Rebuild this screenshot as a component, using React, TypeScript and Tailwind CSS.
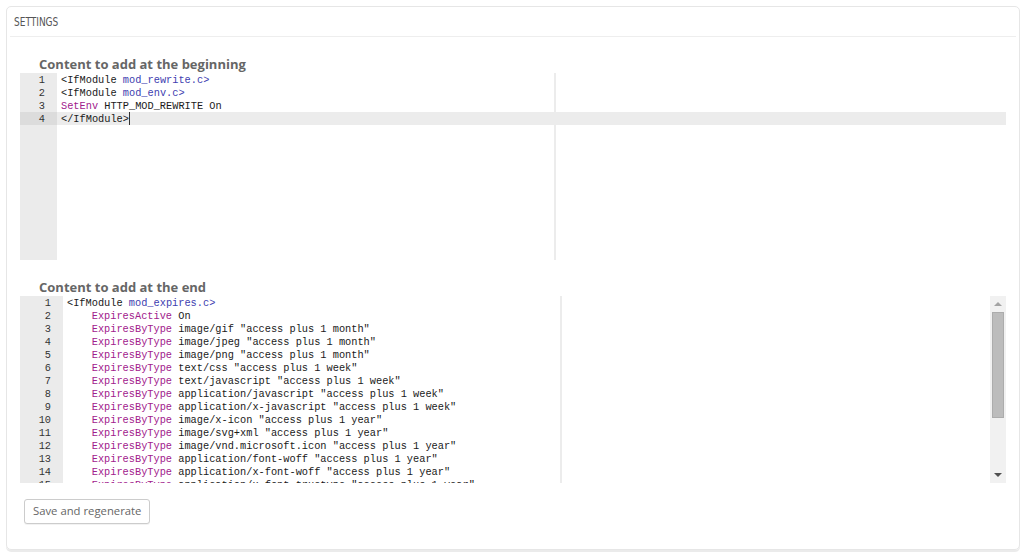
import React from "react";

type Seg = { t: string; c?: string };
type Line = Seg[];

const K = "text-[#a1208c]";
const V = "text-[#4040b0]";

const begin: Line[] = [
  [{ t: "<IfModule" }, { t: " mod_rewrite.c>", c: V }],
  [{ t: "<IfModule" }, { t: " mod_env.c>", c: V }],
  [{ t: "SetEnv", c: K }, { t: " HTTP_MOD_REWRITE On" }],
  [{ t: "</IfModule>" }],
];

const exp = (type: string, dur: string): Line => [
  { t: "    " },
  { t: "ExpiresByType", c: K },
  { t: ` ${type} "access plus 1 ${dur}"` },
];

const end: Line[] = [
  [{ t: "<IfModule" }, { t: " mod_expires.c>", c: V }],
  [{ t: "    " }, { t: "ExpiresActive", c: K }, { t: " On" }],
  exp("image/gif", "month"),
  exp("image/jpeg", "month"),
  exp("image/png", "month"),
  exp("text/css", "week"),
  exp("text/javascript", "week"),
  exp("application/javascript", "week"),
  exp("application/x-javascript", "week"),
  exp("image/x-icon", "year"),
  exp("image/svg+xml", "year"),
  exp("image/vnd.microsoft.icon", "year"),
  exp("application/font-woff", "year"),
  exp("application/x-font-woff", "year"),
  exp("application/x-font-truetype", "year"),
];

const mono = "font-['Liberation_Mono','DejaVu_Sans_Mono',monospace] text-[10.3px] leading-[13px]";

function Editor({
  lines,
  gutterW,
  active,
  cursor,
  scrollbar,
}: {
  lines: Line[];
  gutterW: string;
  active?: number;
  cursor?: boolean;
  scrollbar?: boolean;
}) {
  return (
    <div className={`flex h-[187px] overflow-hidden bg-white ${mono}`}>
      <div className={`${gutterW} shrink-0 bg-[#ebebeb] text-[#333] text-right`}>
        {lines.map((_, i) => (
          <div
            key={i}
            className={`h-[13px] pt-[1px] pr-[12px] ${i === active ? "bg-[#dcdcdc]" : ""}`}
          >
            <div className="h-[12px] leading-[13px]">{i + 1}</div>
          </div>
        ))}
      </div>
      <div className="relative flex-1 min-w-0">
        <div className="absolute top-0 bottom-0 left-[497px] w-[2px] bg-[#ececec]" />
        <div className="relative">
          {lines.map((segs, i) => (
            <div
              key={i}
              className={`h-[13px] pt-[1px] pl-[4px] whitespace-pre text-[#1a1a1a] ${
                i === active ? "bg-[#ececec]" : ""
              }`}
            >
              <div className="h-[12px] leading-[13px]">
                {segs.map((s, j) => (
                  <span key={j} className={s.c}>
                    {s.t}
                  </span>
                ))}
                {cursor && i === active ? (
                  <span className="inline-block w-px h-[13px] align-top -mt-[1px] bg-[#333]" />
                ) : null}
              </div>
            </div>
          ))}
        </div>
      </div>
      {scrollbar ? (
        <div className="w-[16px] shrink-0 bg-[#f1f1f1] flex flex-col items-center">
          <div className="h-[16px] flex items-center justify-center">
            <div className="w-0 h-0 border-l-[4px] border-r-[4px] border-b-[4px] border-l-transparent border-r-transparent border-b-[#a3a3a3]" />
          </div>
          <div className="w-[12px] h-[106px] bg-[#bcbcbc] border border-[#acacac]" />
          <div className="flex-1" />
          <div className="h-[16px] flex items-center justify-center">
            <div className="w-0 h-0 border-l-[4px] border-r-[4px] border-t-[4px] border-l-transparent border-r-transparent border-t-[#505050]" />
          </div>
        </div>
      ) : null}
    </div>
  );
}

export default function App() {
  return (
    <div className="w-[1024px] h-[552px] bg-white pt-[6px] pl-[6px] pr-[4px] pb-[2px] font-['Open_Sans',sans-serif]">
      <div className="h-full rounded-[5px] border border-[#e6e6e6] shadow-[0_2px_0_rgba(0,0,0,0.08)] px-[3px]">
        <div className="h-[30px] border-b border-[#eeeeee] pl-[4px] flex items-center text-[13px] text-[#555] uppercase font-['Liberation_Sans_Narrow','DejaVu_Sans_Condensed','Roboto_Condensed',sans-serif]">
          <span className="inline-block origin-left scale-x-[0.77]">Settings</span>
        </div>
        <div className="px-[10px] pt-[18px]">
          <div className="pl-[19px] h-[18px] leading-[18px] text-[13px] font-bold text-[#666]">
            Content to add at the beginning
          </div>
          <Editor lines={begin} gutterW="w-[37px]" active={3} cursor />
          <div className="mt-[18px] pl-[19px] h-[18px] leading-[18px] text-[13px] font-bold text-[#666]">
            Content to add at the end
          </div>
          <Editor lines={end} gutterW="w-[43px]" scrollbar />
          <div className="mt-[14px] pl-[4px]">
            <button className="h-[25px] px-[8px] rounded-[3px] border border-[#cccccc] bg-white text-[11.3px] text-[#666] shadow-[0_1px_0_rgba(0,0,0,0.05)]">
              Save and regenerate
            </button>
          </div>
        </div>
      </div>
    </div>
  );
}
